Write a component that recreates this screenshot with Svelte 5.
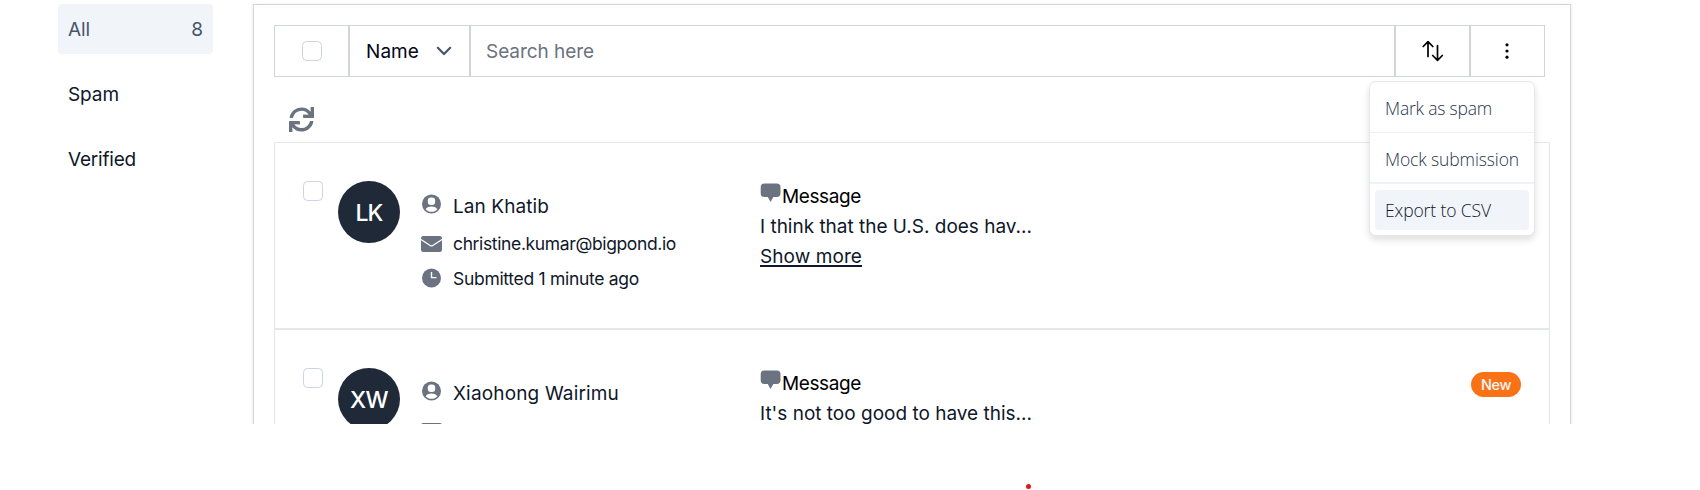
<script>
  const folders = [
    { label: 'All', width: 22, count: 8, active: true },
    { label: 'Spam', width: 51 },
    { label: 'Verified', width: 68 }
  ];
  const rows = [
    {
      initials: 'LK', iw: 27,
      name: 'Lan Khatib', nw: 96,
      email: 'christine.kumar@bigpond.io', ew: 223,
      text: 'I think that the U.S. does hav...', tw: 272,
      isNew: false
    },
    {
      initials: 'XW', iw: 38,
      name: 'Xiaohong Wairimu', nw: 166,
      email: '', ew: 0,
      text: "It's not too good to have this...", tw: 272,
      isNew: true
    }
  ];
  const actions = [
    { label: 'Mark as spam', width: 107 },
    { label: 'Mock submission', width: 134 },
    { label: 'Export to CSV', width: 106, active: true }
  ];

  // Tracks the text so that it takes the given width.
  function fit(node, width) {
    const natural = node.getBoundingClientRect().width;
    const count = node.textContent.length;
    if (width && count) node.style.letterSpacing = `${(width - natural) / count}px`;
  }
</script>

<div class="page">
  <main>
    <nav>
      {#each folders as f}
        <div class="folder" class:active={f.active}>
          <span use:fit={f.width}>{f.label}</span>
          {#if f.count}<span>{f.count}</span>{/if}
        </div>
      {/each}
    </nav>

    <section class="panel">
      <div class="toolbar">
        <div class="cell"><i class="check"></i></div>
        <div class="cell select">
          <span use:fit={53}>Name</span>
          <svg width="16" height="10" viewBox="0 0 16 10"><path d="M1.8 1.8 8 8l6.2-6.2" fill="none" stroke="#475569" stroke-width="2.2" stroke-linecap="round" stroke-linejoin="round" /></svg>
        </div>
        <div class="cell search"><span use:fit={108}>Search here</span></div>
        <div class="cell">
          <svg width="22" height="22" viewBox="0 0 22 22"><path d="M6 16.5V1.8M1.2 6.5 6 1.6l4.8 4.9M15.5 5.5v14.7M10.7 15.5l4.8 4.9 4.8-4.9" fill="none" stroke="#000" stroke-width="1.7" stroke-linecap="round" stroke-linejoin="round" /></svg>
        </div>
        <div class="cell more">
          <svg width="4" height="18" viewBox="0 0 4 18"><circle cx="2" cy="2.8" r="1.6" /><circle cx="2" cy="9" r="1.6" /><circle cx="2" cy="15.2" r="1.6" /></svg>
          <div class="menu">
            {#each actions as a}
              <div class="item" class:active={a.active}><div><span use:fit={a.width}>{a.label}</span></div></div>
            {/each}
          </div>
        </div>
      </div>

      <svg class="refresh" width="25" height="25" viewBox="0 0 512 512"><path d="M440.65 12.57l4 82.77A247.16 247.16 0 0 0 255.83 8C134.73 8 33.91 94.92 12.29 209.82A12 12 0 0 0 24.09 224h49.05a12 12 0 0 0 11.67-9.26 175.91 175.91 0 0 1 317-56.94l-101.46-4.86a12 12 0 0 0-12.57 12v47.41a12 12 0 0 0 12 12H500a12 12 0 0 0 12-12V12a12 12 0 0 0-12-12h-47.37a12 12 0 0 0-11.98 12.57zM255.83 432a175.61 175.61 0 0 1-146-77.8l101.8 4.87a12 12 0 0 0 12.57-12v-47.4a12 12 0 0 0-12-12H12a12 12 0 0 0-12 12V500a12 12 0 0 0 12 12h47.35a12 12 0 0 0 12-12.6l-4.15-82.57A247.17 247.17 0 0 0 255.83 504c121.11 0 221.93-86.92 243.55-201.82a12 12 0 0 0-11.8-14.18h-49.05a12 12 0 0 0-11.67 9.26A175.86 175.86 0 0 1 255.83 432z" /></svg>

      <div class="list">
        {#each rows as r}
          <article>
            <i class="check"></i>
            <div class="avatar"><span use:fit={r.iw}>{r.initials}</span></div>
            <div class="contact">
              <div class="line name">
                <svg width="21" height="20" viewBox="0 0 21 20"><circle cx="10.5" cy="10" r="9.5" /><rect x="6.8" y="3.4" width="7.4" height="7.6" rx="3.2" fill="#fff" /><path d="M4.6 15.2c1.3-2 3.4-2.7 5.9-2.7s4.6.7 5.9 2.7c-1.5 1.7-3.5 2.6-5.9 2.6s-4.4-.9-5.9-2.6Z" fill="#fff" /></svg>
                <span use:fit={r.nw}>{r.name}</span>
              </div>
              <div class="line email">
                <svg width="21" height="16" viewBox="0 0 21 16"><rect width="21" height="16" rx="2.3" /><path d="M0 3.6 9.2 9.5q1.3.8 2.6 0L21 3.6" fill="none" stroke="#fff" stroke-width="1.3" /></svg>
                {#if r.email}<span use:fit={r.ew}>{r.email}</span>{/if}
              </div>
              {#if r.email}
                <div class="line time">
                  <svg width="21" height="20" viewBox="0 0 21 20"><circle cx="10.5" cy="10" r="9.5" /><path d="M10.5 4v5.6h5" fill="none" stroke="#fff" stroke-width="1.4" /></svg>
                  <span use:fit={186}>Submitted 1 minute ago</span>
                </div>
              {/if}
            </div>
            <div class="message">
              <div class="title">
                <svg width="21" height="20" viewBox="0 0 21 20"><path d="M4.4.5h12.4Q20.5.5 20.5 4.2v6Q20.5 13.9 16.8 13.9H13.4L10.5 18.9 7.8 13.9H4.4Q.7 13.9.7 10.2V4.2Q.7.5 4.4.5Z" /></svg>
                <span use:fit={79}>Message</span>
              </div>
              <div><span use:fit={r.tw}>{r.text}</span></div>
              {#if !r.isNew}<div><span class="link" use:fit={102}>Show more</span></div>{/if}
            </div>
            {#if r.isNew}<div class="badge"><span use:fit={30}>New</span></div>{/if}
          </article>
        {/each}
      </div>
    </section>
  </main>
  <i class="dot"></i>
</div>

<style>
  :global(body) { margin: 0; background: #fff; }
  .page {
    box-sizing: border-box;
    width: 1700px;
    height: 490px;
    overflow: hidden;
    font: 19px/30px Inter, sans-serif;
    color: #0f172a;
  }
  main {
    box-sizing: border-box;
    display: flex;
    align-items: flex-start;
    gap: 40px;
    height: 424px;
    padding: 4px 0 0 58px;
    overflow: hidden;
  }
  span { white-space: nowrap; }
  svg { display: block; flex: none; }
  nav { display: flex; flex-direction: column; gap: 15px; width: 155px; }
  .folder {
    box-sizing: border-box;
    display: flex;
    align-items: center;
    justify-content: space-between;
    height: 50px;
    padding: 2px 10px 0;
    border-radius: 4px;
  }
  .folder.active { background: #f1f5f9; color: #475569; }
  .panel {
    box-sizing: border-box;
    width: 1318px;
    height: 600px;
    padding: 20px 20px 0;
    border: 1px solid #d1d5db;
    box-shadow: 0 1px 4px rgba(15, 23, 42, 0.1);
  }
  .toolbar { display: flex; width: 1271px; height: 52px; }
  .cell {
    position: relative;
    box-sizing: border-box;
    display: flex;
    align-items: center;
    justify-content: center;
    width: 75px;
    border: 1px solid #d1d5db;
  }
  .select { width: 121px; padding-right: 1px; gap: 17px; color: #020617; }
  .select span, .search span { padding-top: 2px; }
  .search { flex: 1; justify-content: flex-start; padding-left: 15px; color: #6b7280; }
  .more { padding-right: 1px; }
  .check {
    box-sizing: border-box;
    display: block;
    flex: none;
    width: 20px;
    height: 20px;
    border: 1px solid #cbd5e1;
    border-radius: 4.5px;
  }
  .refresh { margin: 30px 0 10px 15px; fill: #6b7280; }
  .menu {
    position: absolute;
    z-index: 2;
    top: 55px;
    right: 9px;
    box-sizing: border-box;
    width: 166px;
    height: 155px;
    background: #fff;
    border: 1px solid #e5e7eb;
    border-radius: 7px;
    box-shadow: 0 4px 7px rgba(0, 0, 0, 0.13);
    font: 17.5px/40px "Open Sans", sans-serif;
    font-weight: 350;
    color: #28344a;
  }
  .item { box-sizing: border-box; height: 51px; padding: 6px 5px 4px; border-bottom: 1px solid #eef2f7; }
  .item > div { height: 40px; padding-left: 10px; border-radius: 4px; }
  .item:nth-child(2) { border-bottom-width: 2px; }
  .item:last-child { border: 0; }
  .item.active > div { background: #f1f5f9; color: #0f172a; }
  .list { width: 1276px; }
  article {
    box-sizing: border-box;
    display: flex;
    align-items: flex-start;
    height: 187px;
    padding: 38px 28px 0;
    border: 1px solid #e5e7eb;
  }
  .avatar {
    box-sizing: border-box;
    display: flex;
    align-items: center;
    justify-content: center;
    flex: none;
    width: 62px;
    height: 62px;
    margin-left: 15px;
    padding-top: 2px;
    border-radius: 50%;
    background: #1f2937;
    color: #fff;
    font-size: 23px;
    font-weight: 450;
  }
  .contact { width: 339px; padding-left: 21px; box-sizing: border-box; fill: #6b7280; }
  .line { display: flex; align-items: center; gap: 11px; height: 35px; font-size: 17.5px; }
  .name { height: 38px; margin-top: 6px; font-size: 19px; }
  .name svg { margin-top: -5px; }
  .name span { padding-top: 2px; }
  .email { height: 37px; }
  .time { height: 33px; }
  .time svg { margin-top: -1px; }
  .message { flex: 1; padding: 1px 0 0 21px; }
  .title { display: flex; gap: 1px; color: #000; }
  .title svg { margin-top: 1px; fill: #6b7280; }
  .link { text-decoration: underline; text-decoration-thickness: 2px; text-underline-offset: 2px; }
  .badge {
    display: flex;
    align-items: center;
    justify-content: center;
    width: 50px;
    height: 25px;
    margin-top: 4px;
    border-radius: 13px;
    background: #f97316;
    color: #f1f5f9;
    font-size: 14.5px;
    font-weight: 500;
  }
  .dot {
    display: block;
    width: 5px;
    height: 5px;
    margin: 60px 0 0 1026px;
    border-radius: 50%;
    background: #e81414;
  }
</style>
